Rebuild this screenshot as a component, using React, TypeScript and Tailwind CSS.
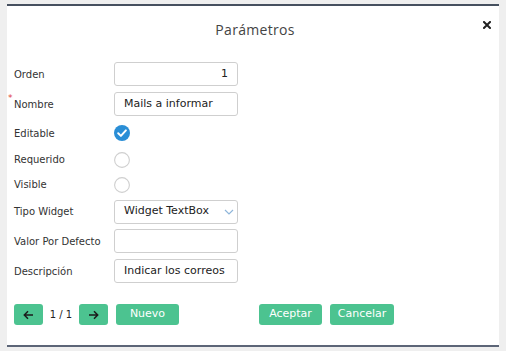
import React from "react";

const labelCls = "w-[100px] shrink-0 text-[10px] text-[#333]";
const inputCls =
  "w-[124px] h-[24px] border border-[#cfcfcf] rounded-[3px] bg-white flex items-center px-[9px] text-[11px] text-[#222]";

function Row({ h, label, children, required }: { h: string; label: string; children?: React.ReactNode; required?: boolean }) {
  return (
    <div className={`flex items-center ${h}`}>
      <div className={`${labelCls} relative`}>
        {required && <span className="absolute left-[-6px] top-[-5px] text-[9px] text-[#e04040]">*</span>}
        {label}
      </div>
      {children}
    </div>
  );
}

function Check({ on }: { on?: boolean }) {
  if (on)
    return (
      <svg width="16" height="16" viewBox="0 0 16 16">
        <circle cx="8" cy="8" r="8" fill="#2a8ed6" />
        <path d="M4.2 8.3 L6.9 10.9 L11.9 5.4" fill="none" stroke="#fff" strokeWidth="2" strokeLinecap="round" strokeLinejoin="round" />
      </svg>
    );
  return (
    <svg width="16" height="16" viewBox="0 0 16 16">
      <circle cx="8" cy="8" r="7.4" fill="#fff" stroke="#cfcfcf" strokeWidth="1.1" />
    </svg>
  );
}

const btn = "h-[21px] rounded-[3px] bg-[#4cc390] text-white text-[11px] flex items-center justify-center shrink-0";

export default function App() {
  return (
    <div className="w-[506px] h-[351px] bg-[#efefef] pt-[4px] pl-[7px] pr-[7px]" style={{ fontFamily: '"DejaVu Sans", Verdana, sans-serif' }}>
      <div className="w-[492px] h-[343px] bg-white border-t-2 border-b-2 border-t-[#46505f] border-b-[#5c6577] flex flex-col">
        <div className="relative h-[46px] flex items-center justify-center">
          <span className="text-[14px] text-[#444] tracking-[0.3px] ml-[4px]" style={{ fontFamily: '"Open Sans", sans-serif' }}>
            Parámetros
          </span>
          <svg className="absolute left-[476px] top-[15px]" width="8" height="8" viewBox="0 0 8 8">
            <path d="M1 1 L7 7 M7 1 L1 7" stroke="#222" strokeWidth="2" strokeLinecap="square" />
          </svg>
        </div>
        <div className="pl-[7px] pt-[7px] flex flex-col">
          <Row h="h-[30px]" label="Orden">
            <div className={`${inputCls} justify-end`}>1</div>
          </Row>
          <Row h="h-[30px]" label="Nombre" required>
            <div className={inputCls}>Mails a informar</div>
          </Row>
          <Row h="h-[28px]" label="Editable">
            <Check on />
          </Row>
          <Row h="h-[25px]" label="Requerido">
            <Check />
          </Row>
          <Row h="h-[25px]" label="Visible">
            <Check />
          </Row>
          <Row h="h-[29px]" label="Tipo Widget">
            <div className={`${inputCls} justify-between pr-[3px]`}>
              <span>Widget TextBox</span>
              <svg width="10" height="6" viewBox="0 0 10 6">
                <path d="M1 1 L5 5 L9 1" fill="none" stroke="#8fb6da" strokeWidth="1.2" />
              </svg>
            </div>
          </Row>
          <Row h="h-[30px]" label="Valor Por Defecto">
            <div className={inputCls}></div>
          </Row>
          <Row h="h-[30px]" label="Descripción">
            <div className={inputCls}>Indicar los correos</div>
          </Row>
          <div className="mt-[18px] flex items-center h-[21px]">
            <div className={`${btn} w-[29px]`}>
              <svg width="11" height="10" viewBox="0 0 11 10">
                <path d="M10 5 H1.5 M5 1.3 L1.3 5 L5 8.7" fill="none" stroke="#1b1b1b" strokeWidth="1.5" />
              </svg>
            </div>
            <span className="w-[36px] text-[10px] text-[#222] text-center whitespace-nowrap shrink-0">1 / 1</span>
            <div className={`${btn} w-[29px]`}>
              <svg width="11" height="10" viewBox="0 0 11 10">
                <path d="M1 5 H9.5 M6 1.3 L9.7 5 L6 8.7" fill="none" stroke="#1b1b1b" strokeWidth="1.5" />
              </svg>
            </div>
            <div className={`${btn} w-[63px] ml-[8px]`}>Nuevo</div>
            <div className={`${btn} w-[63px] ml-[80px]`}>Aceptar</div>
            <div className={`${btn} w-[64px] ml-[8px]`}>Cancelar</div>
          </div>
        </div>
      </div>
    </div>
  );
}
